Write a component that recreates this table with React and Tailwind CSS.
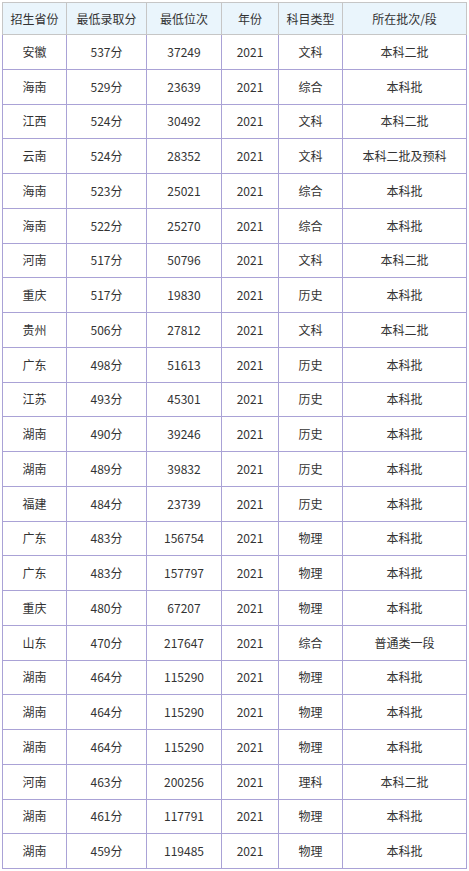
import React from "react";

const rows = [
  ["安徽", "537分", "37249", "2021", "文科", "本科二批"],
  ["海南", "529分", "23639", "2021", "综合", "本科批"],
  ["江西", "524分", "30492", "2021", "文科", "本科二批"],
  ["云南", "524分", "28352", "2021", "文科", "本科二批及预科"],
  ["海南", "523分", "25021", "2021", "综合", "本科批"],
  ["海南", "522分", "25270", "2021", "综合", "本科批"],
  ["河南", "517分", "50796", "2021", "文科", "本科二批"],
  ["重庆", "517分", "19830", "2021", "历史", "本科批"],
  ["贵州", "506分", "27812", "2021", "文科", "本科二批"],
  ["广东", "498分", "51613", "2021", "历史", "本科批"],
  ["江苏", "493分", "45301", "2021", "历史", "本科批"],
  ["湖南", "490分", "39246", "2021", "历史", "本科批"],
  ["湖南", "489分", "39832", "2021", "历史", "本科批"],
  ["福建", "484分", "23739", "2021", "历史", "本科批"],
  ["广东", "483分", "156754", "2021", "物理", "本科批"],
  ["广东", "483分", "157797", "2021", "物理", "本科批"],
  ["重庆", "480分", "67207", "2021", "物理", "本科批"],
  ["山东", "470分", "217647", "2021", "综合", "普通类一段"],
  ["湖南", "464分", "115290", "2021", "物理", "本科批"],
  ["湖南", "464分", "115290", "2021", "物理", "本科批"],
  ["湖南", "464分", "115290", "2021", "物理", "本科批"],
  ["河南", "463分", "200256", "2021", "理科", "本科二批"],
  ["湖南", "461分", "117791", "2021", "物理", "本科批"],
  ["湖南", "459分", "119485", "2021", "物理", "本科批"],
];

const headers = ["招生省份", "最低录取分", "最低位次", "年份", "科目类型", "所在批次/段"];
const widths = [64, 80, 75, 57, 64, 124];

export default function App() {
  return (
    <div
      className="w-[469px] h-[871px] bg-white pt-[2px] pl-[2px] overflow-hidden"
      style={{ fontFamily: '"Noto Sans CJK SC", "Noto Sans", sans-serif' }}
    >
      <table className="table-fixed border-collapse w-[464px] text-[12px] text-[#333]">
        <colgroup>
          {widths.map((w, i) => (
            <col key={i} style={{ width: w }} />
          ))}
        </colgroup>
        <thead>
          <tr className="h-[32px] bg-[#eaf5fc]">
            {headers.map((h) => (
              <th key={h} className="border border-[#c6c6c6] font-normal text-center p-0">
                {h}
              </th>
            ))}
          </tr>
        </thead>
        <tbody>
          {rows.map((r, i) => (
            <tr key={i} className="h-[34.75px]">
              {r.map((c, j) => (
                <td key={j} className="border border-[#aaa2d6] text-center p-0">
                  {c}
                </td>
              ))}
            </tr>
          ))}
        </tbody>
      </table>
    </div>
  );
}
